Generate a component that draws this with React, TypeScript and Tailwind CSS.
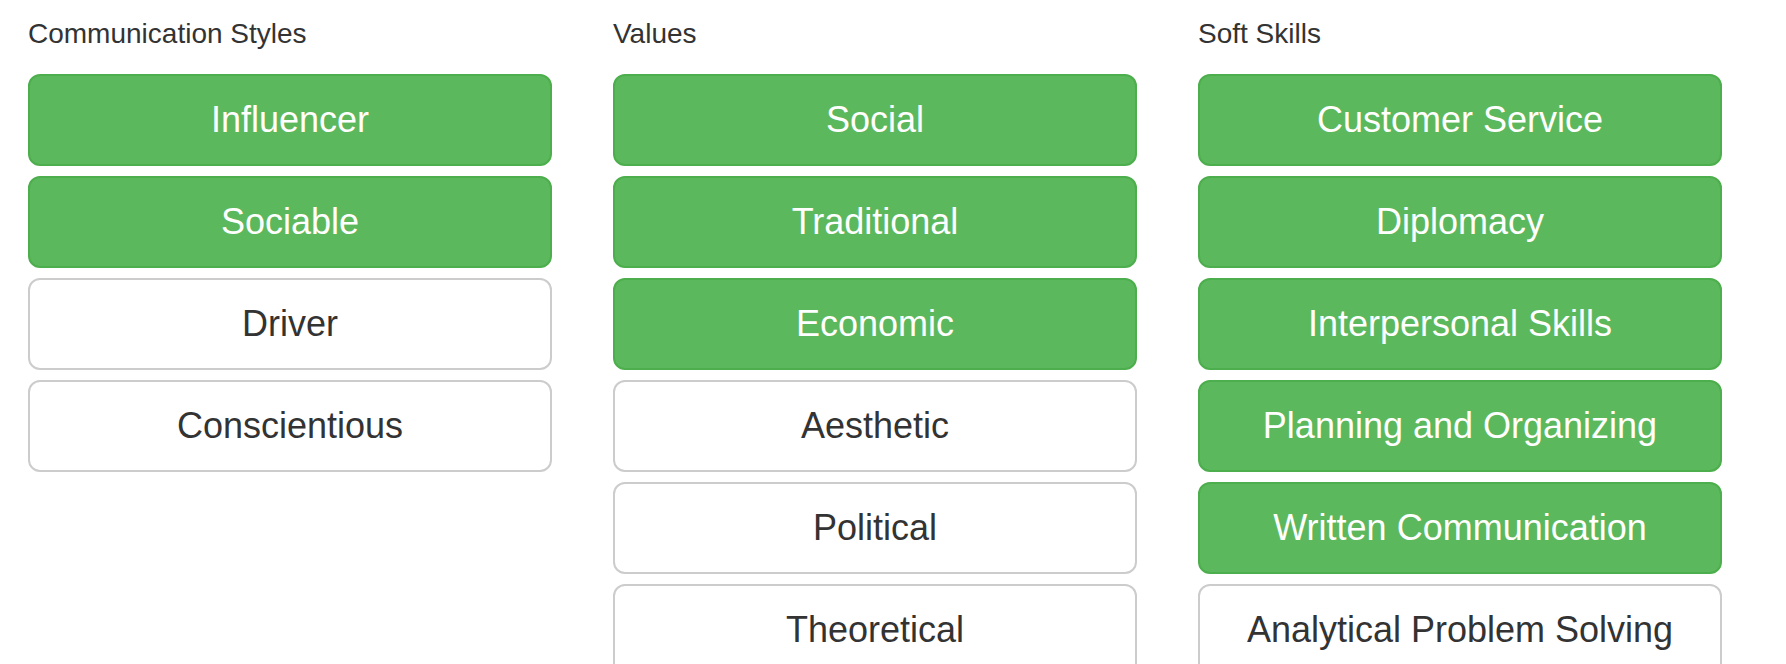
import React from 'react';

type Item = { label: string; active: boolean };
type Group = { title: string; items: Item[] };

const groups: Group[] = [
  {
    title: 'Communication Styles',
    items: [
      { label: 'Influencer', active: true },
      { label: 'Sociable', active: true },
      { label: 'Driver', active: false },
      { label: 'Conscientious', active: false },
    ],
  },
  {
    title: 'Values',
    items: [
      { label: 'Social', active: true },
      { label: 'Traditional', active: true },
      { label: 'Economic', active: true },
      { label: 'Aesthetic', active: false },
      { label: 'Political', active: false },
      { label: 'Theoretical', active: false },
    ],
  },
  {
    title: 'Soft Skills',
    items: [
      { label: 'Customer Service', active: true },
      { label: 'Diplomacy', active: true },
      { label: 'Interpersonal Skills', active: true },
      { label: 'Planning and Organizing', active: true },
      { label: 'Written Communication', active: true },
      { label: 'Analytical Problem Solving', active: false },
    ],
  },
];

const App: React.FC = () => {
  return (
    <div
      className="min-h-screen bg-white pt-[14px] pl-[28px]"
      style={{ fontFamily: '"Liberation Sans", Arial, Helvetica, sans-serif' }}
    >
      <div className="grid grid-cols-[524px_524px_524px] gap-x-[61px] items-start">
        {groups.map((group) => (
          <div key={group.title} className="flex flex-col">
            <div className="text-[28px] leading-[40px] text-[#333333] mb-[20px]">
              {group.title}
            </div>
            <div className="flex flex-col gap-[10px]">
              {group.items.map((item) => (
                <button
                  key={item.label}
                  className={`h-[92px] w-full rounded-[12px] border-2 text-[36px] leading-[48px] text-center ${
                    item.active
                      ? 'bg-[#5cb85c] border-[#4cae4c] text-white'
                      : 'bg-white border-[#cccccc] text-[#333333]'
                  }`}
                >
                  {item.label}
                </button>
              ))}
            </div>
          </div>
        ))}
      </div>
    </div>
  );
};

export default App;
